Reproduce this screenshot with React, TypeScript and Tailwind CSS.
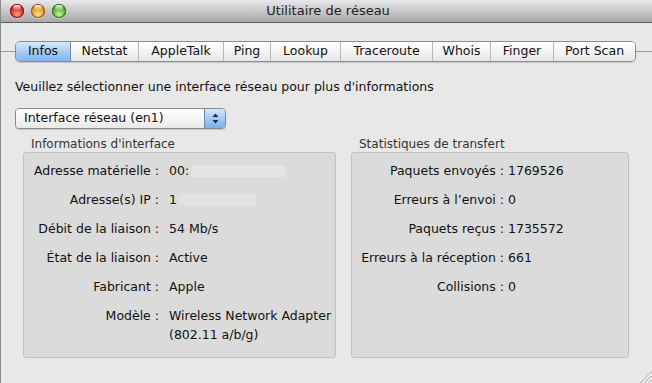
import React from "react";

const tabs = ["Infos", "Netstat", "AppleTalk", "Ping", "Lookup", "Traceroute", "Whois", "Finger", "Port Scan"];
const tabWidths = [55, 68, 85, 47, 70, 92, 58, 63, 81];

function Light({ from, to, edge }: { from: string; to: string; edge: string }) {
  return (
    <div
      className="w-[14px] h-[14px] rounded-full relative"
      style={{
        background: `radial-gradient(circle at 50% 75%, ${from} 0%, ${to} 70%)`,
        boxShadow: `inset 0 0 0 1px ${edge}, 0 1px 0 rgba(255,255,255,0.4)`,
      }}
    >
      <div className="absolute left-[3px] top-[1px] w-[8px] h-[5px] rounded-full bg-gradient-to-b from-white/90 to-white/10" />
    </div>
  );
}

export default function App() {
  const left: [string, React.ReactNode][] = [
    ["Adresse matérielle :", (
      <span className="flex items-center">
        00:<span className="ml-[2px] w-[95px] h-[12px] bg-[#e4e4e4] rounded-[2px]" />
      </span>
    )],
    ["Adresse(s) IP :", (
      <span className="flex items-center">
        1<span className="ml-[2px] w-[77px] h-[12px] bg-[#e2e2e2] rounded-[2px]" />
      </span>
    )],
    ["Débit de la liaison :", "54 Mb/s"],
    ["État de la liaison :", "Active"],
    ["Fabricant :", "Apple"],
    ["Modèle :", (<span>Wireless Network Adapter<br />(802.11 a/b/g)</span>)],
  ];
  const right: [string, string][] = [
    ["Paquets envoyés :", "1769526"],
    ["Erreurs à l’envoi :", "0"],
    ["Paquets reçus :", "1735572"],
    ["Erreurs à la réception :", "661"],
    ["Collisions :", "0"],
  ];

  return (
    <div className="w-[652px] h-[383px] overflow-hidden bg-[#e8e8e8] flex flex-col relative text-[#111] font-['DejaVu_Sans',sans-serif] text-[12.5px] border-l border-[#8a8a8a]">
      {/* title bar */}
      <div className="h-[23px] shrink-0 flex items-center relative bg-gradient-to-b from-[#e8e8e8] to-[#a9a9a9] border-b border-[#5e5e5e]">
        <div className="flex items-center gap-[7px] pl-[9px]">
          <Light from="#ff9a8a" to="#c2160f" edge="#7a1410" />
          <Light from="#ffe08a" to="#d6800c" edge="#8a5510" />
          <Light from="#c4f59a" to="#3e9a1c" edge="#2f6a18" />
        </div>
        <div className="flex-1 text-center text-[13px] text-[#222] pr-[62px]">Utilitaire de réseau</div>
      </div>

      {/* tabs */}
      <div className="mt-[18px] flex items-center h-[21px]">
        <div className="w-[14px] h-px bg-[#9a9a9a]" />
        <div className="flex h-[21px] rounded-[5px] border border-[#8c8c8c] overflow-hidden shadow-[0_1px_1px_rgba(0,0,0,0.15)]">
          {tabs.map((t, i) => (
            <div
              key={t}
              style={{ width: tabWidths[i] }}
              className={
                i === 0
                  ? "flex items-center justify-center bg-gradient-to-b from-[#d8e9fc] via-[#a9cdf3] to-[#7fb5ef] border-r border-[#6a89b0]"
                  : "flex items-center justify-center bg-gradient-to-b from-[#ffffff] via-[#f4f4f4] to-[#e6e6e6] border-r border-[#b8b8b8] last:border-r-0"
              }
            >
              {t}
            </div>
          ))}
        </div>
        <div className="flex-1 h-px bg-[#9a9a9a]" />
      </div>

      <div className="mt-[17px] pl-[14px] leading-[16px]">Veuillez sélectionner une interface réseau pour plus d'informations</div>

      {/* popup */}
      <div className="mt-[13px] ml-[14px] w-[211px] h-[21px] flex rounded-[4px] border border-[#8a8a8a] overflow-hidden shadow-[0_1px_1px_rgba(0,0,0,0.15)]">
        <div className="flex-1 flex items-center pl-[8px] bg-gradient-to-b from-white via-[#f6f6f6] to-[#e9e9e9]">Interface réseau (en1)</div>
        <div className="w-[21px] flex items-center justify-center bg-gradient-to-b from-[#d6e8fc] via-[#a5c9f2] to-[#79b1ee] border-l border-[#6a89b0]">
          <svg width="7" height="11" viewBox="0 0 7 11">
            <path d="M3.5 0.5 L6.5 4 L0.5 4 Z" fill="#1c2a3a" />
            <path d="M3.5 10.5 L6.5 7 L0.5 7 Z" fill="#1c2a3a" />
          </svg>
        </div>
      </div>

      {/* groups */}
      <div className="mt-[7px] flex pl-[22px] gap-[15px]">
        <div className="w-[313px] flex flex-col">
          <div className="pl-[8px] text-[12px] text-[#333] leading-[16px]">Informations d'interface</div>
          <div className="h-[206px] bg-[#dbdbdb] border border-[#c2c2c2] rounded-[3px] pt-[8px]">
            <div className="grid grid-cols-[135px_1fr] gap-y-[10px] gap-x-[10px] leading-[19px]">
              {left.map(([k, v]) => (
                <React.Fragment key={k}>
                  <div className="text-right whitespace-nowrap">{k}</div>
                  <div className="whitespace-nowrap">{v}</div>
                </React.Fragment>
              ))}
            </div>
          </div>
        </div>
        <div className="w-[278px] flex flex-col">
          <div className="pl-[8px] text-[12px] text-[#333] leading-[16px]">Statistiques de transfert</div>
          <div className="h-[206px] bg-[#dbdbdb] border border-[#c2c2c2] rounded-[3px] pt-[8px]">
            <div className="grid grid-cols-[152px_1fr] gap-y-[10px] gap-x-[4px] leading-[19px]">
              {right.map(([k, v]) => (
                <React.Fragment key={k}>
                  <div className="text-right whitespace-nowrap">{k}</div>
                  <div className="whitespace-nowrap">{v}</div>
                </React.Fragment>
              ))}
            </div>
          </div>
        </div>
      </div>

      {/* resize grip */}
      <svg className="absolute right-0 bottom-0" width="13" height="13" viewBox="0 0 13 13">
        <path d="M12.5 2 L2 12.5 M12.5 6 L6 12.5 M12.5 10 L10 12.5" stroke="#8a8a8a" strokeWidth="1" />
        <path d="M12.5 3 L3 12.5 M12.5 7 L7 12.5 M12.5 11 L11 12.5" stroke="#ffffff" strokeWidth="1" />
      </svg>
    </div>
  );
}
